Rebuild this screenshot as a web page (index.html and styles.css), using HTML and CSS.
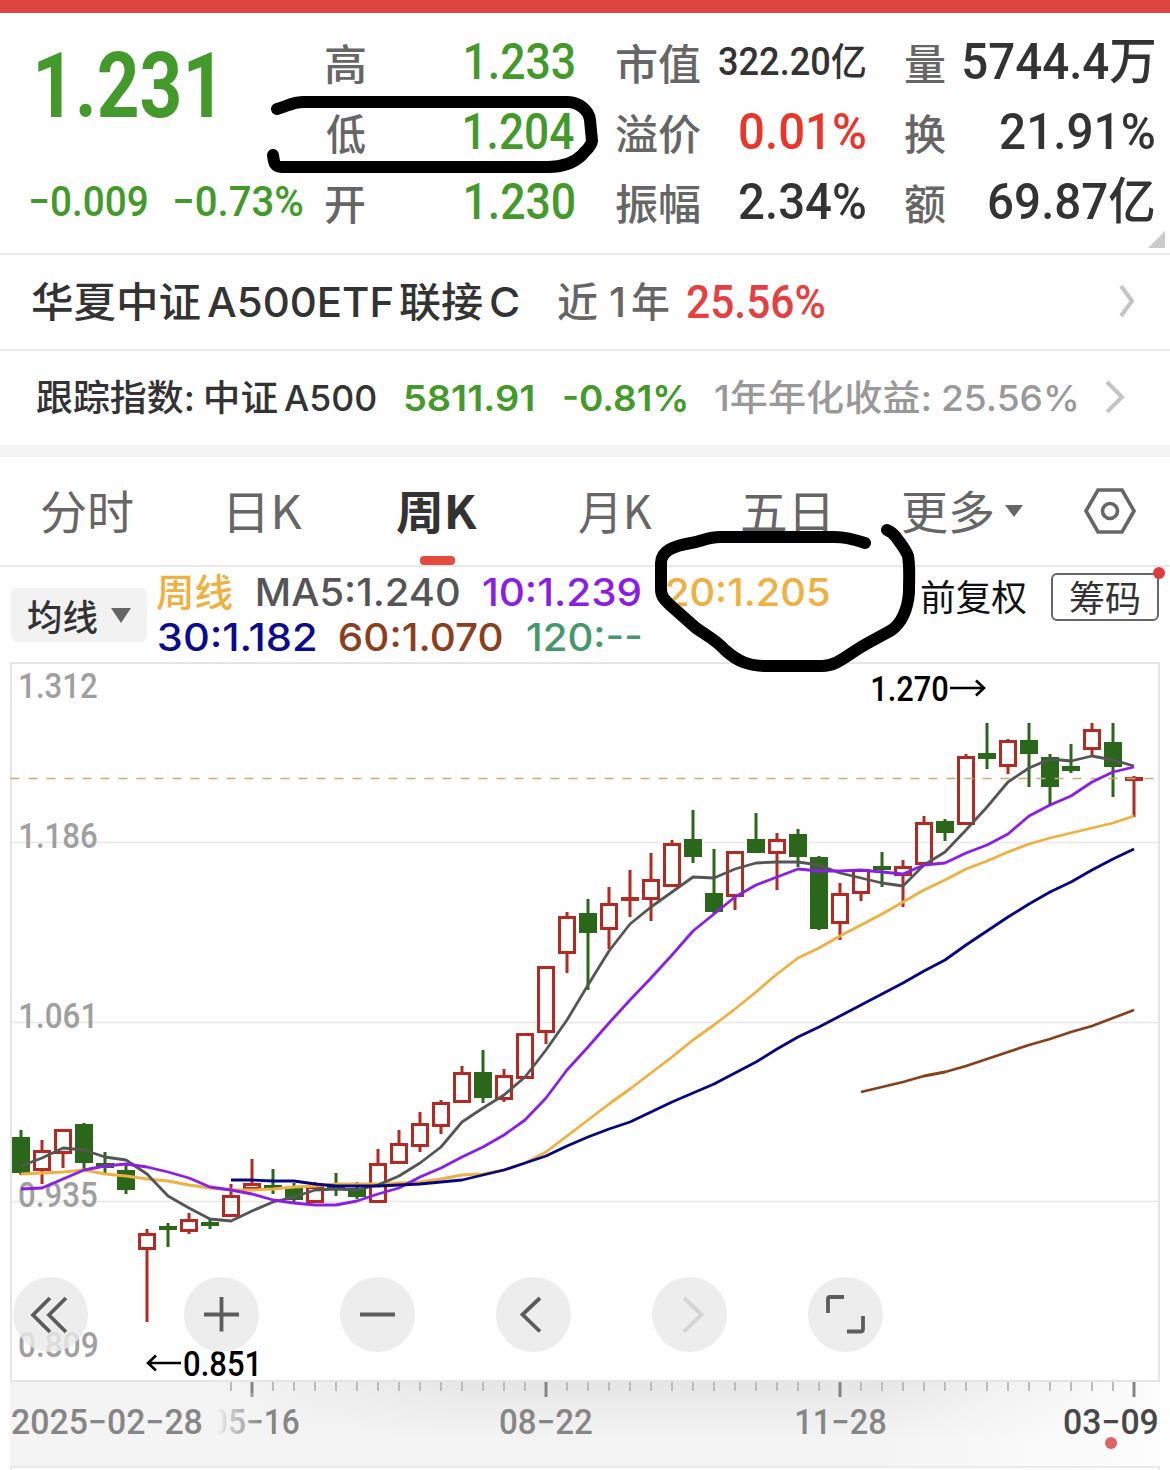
FILE: index.html
```html
<!DOCTYPE html>
<html lang="zh-CN">
<head>
<meta charset="utf-8">
<title>华夏中证A500ETF</title>
<link rel="stylesheet" href="styles.css">
</head>
<body>
<main class="screen">
  <div class="topbar"></div>

  <section class="quote">
    <div class="quote-main">
      <div class="price"><span class="t" data-w="174">1.231</span></div>
      <div class="change"><span class="t" data-w="116">−0.009</span><span class="t" data-w="128">−0.73%</span></div>
    </div>
    <dl class="stats s1">
      <div><dt class="t" data-w="39">高</dt><dd class="t down" data-w="108">1.233</dd></div>
      <div><dt class="t" data-w="39">低</dt><dd class="t down" data-w="109">1.204</dd></div>
      <div><dt class="t" data-w="39">开</dt><dd class="t down" data-w="108">1.230</dd></div>
    </dl>
    <dl class="stats s2">
      <div><dt class="t" data-w="84">市值</dt><dd class="t small" data-w="146">322.20亿</dd></div>
      <div><dt class="t" data-w="84">溢价</dt><dd class="t up" data-w="125">0.01%</dd></div>
      <div><dt class="t" data-w="84">振幅</dt><dd class="t" data-w="125">2.34%</dd></div>
    </dl>
    <dl class="stats s3">
      <div><dt class="t" data-w="40">量</dt><dd class="t" data-w="190">5744.4万</dd></div>
      <div><dt class="t" data-w="40">换</dt><dd class="t" data-w="153">21.91%</dd></div>
      <div><dt class="t" data-w="40">额</dt><dd class="t" data-w="165">69.87亿</dd></div>
    </dl>
    <i class="corner"></i>
  </section>

  <section class="row fund">
    <span class="t" data-w="168">华夏中证</span>
    <span class="t" data-w="184">A500ETF</span>
    <span class="t" data-w="82">联接</span>
    <span class="t" data-w="27">C</span>
    <span class="t muted" data-w="39">近</span>
    <span class="t muted" data-w="13">1</span>
    <span class="t muted" data-w="37">年</span>
    <span class="t rate" data-w="137">25.56%</span>
    <svg class="chev" width="20" height="36" viewBox="0 0 20 36"><path d="M3 3 L14 18 L3 33"/></svg>
  </section>

  <section class="row index">
    <span class="t" data-w="156">跟踪指数:</span>
    <span class="t" data-w="71">中证</span>
    <span class="t" data-w="92">A500</span>
    <span class="t down" data-w="128">5811.91</span>
    <span class="t down" data-w="122">-0.81%</span>
    <span class="t soft" data-w="215">1年年化收益:</span>
    <span class="t soft" data-w="133">25.56%</span>
    <svg class="chev" width="24" height="36" viewBox="0 0 24 36"><path d="M3 3 L18 18 L3 33"/></svg>
  </section>
  <div class="band"></div>

  <nav class="tabs">
    <span class="t" data-w="91">分时</span>
    <span class="t" data-w="72">日K</span>
    <span class="tab-on"><span class="t" data-w="80">周K</span></span>
    <span class="t" data-w="73">月K</span>
    <span class="t" data-w="86">五日</span>
    <span class="more"><span class="t" data-w="90">更多</span><svg width="18" height="12"><path d="M0 0H18L9 12Z" fill="#666"/></svg></span>
    <svg class="gear" width="52" height="48" viewBox="0 0 52 48"><path d="M14 3H38L50 24L38 45H14L2 24Z"/><circle cx="26" cy="24" r="7.5"/></svg>
  </nav>

  <section class="legend">
    <div class="ma-btn"><span class="t" data-w="69">均线</span><svg width="20" height="15"><path d="M0 0H20L10 15Z" fill="#666"/></svg></div>
    <div class="ma">
      <div class="ma-line l1">
        <span class="t c20" data-w="75">周线</span>
        <span class="t c5" data-w="201">MA5:1.240</span>
        <span class="t c10" data-w="157">10:1.239</span>
        <span class="t c20" data-w="162">20:1.205</span>
      </div>
      <div class="ma-line l2">
        <span class="t c30" data-w="156">30:1.182</span>
        <span class="t c60" data-w="162">60:1.070</span>
        <span class="t c120" data-w="113">120:--</span>
      </div>
    </div>
    <div class="adjust"><span class="t" data-w="105">前复权</span></div>
    <div class="chips"><span class="t" data-w="69">筹码</span><i class="dot"></i></div>
  </section>

  <svg class="chart" id="chart" width="1170" height="809" viewBox="0 661 1170 809">
    <defs>
      <linearGradient id="axisV" x1="0" y1="0" x2="0" y2="1"><stop offset="0" stop-color="#e6e6e6"/><stop offset=".7" stop-color="#f4f4f4"/></linearGradient>
      <linearGradient id="axisL" x1="0" x2="1"><stop offset="0" stop-color="#f4f4f4"/><stop offset=".17" stop-color="#f4f4f4"/><stop offset=".4" stop-color="#f4f4f4" stop-opacity="0"/><stop offset=".75" stop-color="#fff" stop-opacity="0"/><stop offset="1" stop-color="#fdfdfd"/></linearGradient>
      <linearGradient id="fade" gradientUnits="userSpaceOnUse" x1="204" x2="262" y1="0" y2="0"><stop offset="0" stop-color="#f4f4f4"/><stop offset=".22" stop-color="#f4f4f4"/><stop offset=".4" stop-color="#f4f4f4" stop-opacity=".7"/><stop offset="1" stop-color="#f4f4f4" stop-opacity="0"/></linearGradient>
    </defs>
    <rect x="10" y="1382" width="1150" height="84" fill="url(#axisV)"/>
    <rect x="10" y="1382" width="1150" height="84" fill="url(#axisL)"/>
    <path d="M10 1467H1160M11 1467V1470M1159 1467V1470" stroke="#e4e4e4" stroke-width="1.5"/>
    <rect x="11" y="663" width="1148" height="718" fill="none" stroke="#e5e5e5" stroke-width="2"/>
    <path d="M12 842.5H1158M12 1022.5H1158M12 1201.5H1158" stroke="#e8e8e8" stroke-width="1.5"/>
    <g class="scale">
      <text data-x="20" data-w="77" y="698">1.312</text>
      <text data-x="20" data-w="77" y="848">1.186</text>
      <text data-x="20" data-w="73" y="1028">1.061</text>
      <text data-x="19" data-w="78" y="1207">0.935</text>
      <text data-x="19" data-w="78" y="1357">0.809</text>
    </g>
    <g id="candles"></g>
    <path d="M10.5 778.5H1154" stroke="#c9ab78" stroke-width="1.6" stroke-dasharray="9 9"/>
    <g id="lines"></g>
    <g class="mark">
      <text data-x="872" data-w="76" y="701">1.270</text>
      <path d="M950 688H984M976 680.5L984 688L976 695.5"/>
      <text data-x="184" data-w="73" y="1376">0.851</text>
      <path d="M181 1363H148M156 1355.5L148 1363L156 1370.5"/>
    </g>
    <g id="ticks"></g>
    <g class="dates">
      <text data-x="211" data-w="88" y="1434">05−16</text>
      <rect x="204" y="1393" width="58" height="50" fill="url(#fade)"/>
      <text data-x="12" data-w="190" y="1434">2025−02−28</text>
      <text data-x="500" data-w="92" y="1434">08−22</text>
      <text data-x="796" data-w="90" y="1434">11−28</text>
      <text class="now" data-x="1064" data-w="93" y="1434">03−09</text>
    </g>
    <circle cx="1111" cy="1443" r="6" fill="#e06463"/>
    <g class="btns">
      <circle cx="50.500" cy="1314.500" r="37.500"/><circle cx="221.500" cy="1314.500" r="37.500"/><circle cx="377.500" cy="1314.500" r="37.500"/><circle cx="533.500" cy="1314.500" r="37.500"/><circle cx="689.500" cy="1314.500" r="37.500"/><circle cx="845.500" cy="1314.500" r="37.500"/>
      <path d="M50 1298L33 1315L50 1332M66 1298L49 1315L66 1332"/>
      <path d="M204 1314.5H239M221.5 1297V1331.5M360 1314.5H395"/>
      <path d="M540 1298L522.5 1314.5L540 1331.5"/>
      <path class="off" d="M684 1298L701.5 1314.5L684 1331.5"/>
      <path d="M844 1297H830Q828 1297 828 1299V1313M863 1316V1329Q863 1331.500 861 1331.500H847"/>
    </g>
  </svg>

  <svg class="ink" width="1170" height="1470" viewBox="0 0 1170 1470">
    <path d="M277 109C288 106 292 102 304 102H568C578 102 589 110 590 120L592 141C591 147 586 150 582 155C573 164 562 167 548 167H282C274 167 274 162 273 155"/>
    <path d="M865 543C852 539 845 537 834 537H720C708 537 703 541 691 543C673 546 661 551 661 563V589C661 597 665 600 670 605L696 628C706 635 716 640 725 650C738 662 750 666 766 666H822C838 666 846 655 868 643L890 631C902 624 908 608 909 592C909 578 910 566 908 556C905 548 900 543 896 537Q892 532 887 530"/>
  </svg>
</main>
<script src="app.js"></script>
</body>
</html>
```

FILE: styles.css
```css
* { box-sizing: border-box; margin: 0; padding: 0; }
body { background: #fefefe; font-family: Roboto, "Noto Sans CJK SC", sans-serif; color: #333; }
.screen { position: relative; width: 1170px; height: 1470px; overflow: hidden; }
.topbar { height: 13px; background: #dc4540; }

.t { display: block; white-space: nowrap; flex: none; }
.t > b { display: inline-block; font-weight: inherit; transform-origin: 0 50%; }
.down { color: #439a2b; }
.up { color: #e93629; }

.quote { position: relative; display: flex; height: 240px; padding: 14px 16px 0 0; }
.quote-main { width: 326px; color: #439a2b; }
.price { height: 116px; padding-left: 38px; font-size: 91px; line-height: 118px; font-weight: 700; }
.change { display: flex; gap: 28px; margin-top: 23px; padding-left: 31px; font-size: 42px; line-height: 71px; font-weight: 500; }
.stats > div { display: flex; justify-content: space-between; align-items: center; height: 70px; }
.stats dt { font: 500 42px/70px "Noto Sans CJK SC", sans-serif; color: #666; }
.stats dd { font-size: 50px; line-height: 70px; font-weight: 500; }
.stats dd.small { font-size: 38px; }
.s1 { width: 248px; }
.s2 { width: 249px; margin-left: 42px; }
.s3 { width: 249px; margin-left: 40px; }
.corner { position: absolute; right: 5px; bottom: 5px; width: 17px; height: 17px; background: #ccc; clip-path: polygon(100% 0, 100% 100%, 0 100%); }

.row { display: grid; align-items: center; height: 96px; border-top: 2px solid #e9e9e9; font-family: Inter, "Noto Sans CJK SC", sans-serif; font-weight: 500; }
.fund { grid-template-columns: 176px 192px 91px 67px 52px 22px 55px 431px 20px; padding-left: 32px; font-size: 41px; line-height: 60px; }
.index { grid-template-columns: 169px 78px 121px 159px 151px 228px 161px 24px; padding-left: 37px; font-size: 36px; line-height: 60px; }
.index .down { font-weight: 600; }
.muted { color: #666; }
.soft { color: #999; }
.rate { font-family: Roboto, sans-serif; font-size: 46px; color: #e63f41; }
.chev { fill: none; stroke: #c4c4c4; stroke-width: 4; margin-top: -2px; }
.band { height: 12px; background: #f4f4f4; }

.tabs { display: grid; grid-template-columns: 188px 167px 182px 163px 161px 181px 52px; align-items: center; height: 108px; padding: 0 0 4px 42px; font: 400 46px/66px "Noto Sans CJK SC", sans-serif; color: #666; }
.tab-on { position: relative; color: #333; font-weight: 700; }
.tab-on::after { content: ""; position: absolute; left: 23px; top: 80px; width: 35px; height: 9px; border-radius: 4px; background: #e64a3c; }
.more { display: flex; align-items: center; gap: 12px; }
.more svg { margin-top: 4px; }
.gear { fill: none; stroke: #666; stroke-width: 3.6; margin-top: 3px; }

.legend { display: flex; height: 96px; padding: 0 10px 0 11px; border-top: 2px solid #e9e9e9; }
.ma-btn { display: flex; align-items: center; gap: 14px; width: 136px; height: 54px; margin-top: 21px; padding-left: 17px; border-radius: 6px; background: #f2f2f2; font: 500 36px/50px "Noto Sans CJK SC", sans-serif; }
.ma { width: 763px; font: 550 38px/45px Inter, "Noto Sans CJK SC", sans-serif; margin-left: 10px; }
.ma-line { display: grid; height: 45px; }
.l1 { grid-template-columns: 101px 225px 184px 163px; margin-top: 3px; }
.l2 { grid-template-columns: 181px 187px 114px; padding-left: 2px; }
.c5 { color: #555; } .c10 { color: #8a1ee6; } .c20 { color: #efb042; }
.c30 { color: #0b0b90; } .c60 { color: #8b3f1d; } .c120 { color: #46976e; }
.adjust { width: 105px; margin-left: 1px; font: 400 36px/57px "Noto Sans CJK SC", sans-serif; color: #111; }
.chips { position: relative; width: 108px; height: 48px; margin: 6px 0 0 25px; padding-left: 17px; border: 2px solid #666; border-radius: 6px; font: 400 36px/43px "Noto Sans CJK SC", sans-serif; }
.dot { position: absolute; right: -8px; top: -8px; width: 12px; height: 12px; border-radius: 50%; background: #e03c3f; }

.chart { display: block; }
.chart text { font-family: Roboto, sans-serif; font-size: 35px; font-weight: 500; }
.scale text { fill: #9f9f9f; }
.mark text { fill: #000; }
.mark path { fill: none; stroke: #000; stroke-width: 2.6; }
.dates text { fill: #868686; }
.dates .now { fill: #484848; }
.candle { stroke-width: 3; }
.rise { stroke: #b32a22; fill: none; }
.fall { stroke: #2a671a; fill: #2a671a; }
.avg { fill: none; stroke-width: 2.8; stroke-linejoin: round; }
.btns circle { fill: #e9e9e9; fill-opacity: .82; }
.btns path { fill: none; stroke: #5c5c5c; stroke-width: 3.8; }
.btns .off { stroke: #d4d4d4; }
.ink { position: absolute; left: 0; top: 0; fill: none; stroke: #000; stroke-width: 12; stroke-linecap: round; stroke-linejoin: round; pointer-events: none; }
```

FILE: app.js
```js
const NS = 'http://www.w3.org/2000/svg';
const pen = document.createElement('canvas').getContext('2d');

// Visible extent of a string in an element's own font.
function extent(el) {
  const s = getComputedStyle(el);
  pen.font = `${s.fontWeight} ${s.fontSize} ${s.fontFamily}`;
  const m = pen.measureText(el.textContent);
  return { left: -m.actualBoundingBoxLeft, width: m.actualBoundingBoxLeft + m.actualBoundingBoxRight };
}

// Condense or widen labels to their column width.
document.querySelectorAll('.t').forEach(el => {
  const w = +el.dataset.w, e = extent(el), k = w / e.width;
  const b = document.createElement('b');
  b.textContent = el.textContent;
  b.style.transform = `translateX(${-e.left * k}px) scaleX(${k})`;
  el.replaceChildren(b);
  el.style.width = w + 'px';
});
document.querySelectorAll('.chart text').forEach(el => {
  const e = extent(el), k = el.dataset.w / e.width, y = el.getAttribute('y');
  el.removeAttribute('y');
  el.setAttribute('transform', `translate(${el.dataset.x - e.left * k} ${y}) scale(${k} 1)`);
});

function add(parent, tag, attrs) {
  const n = document.createElementNS(NS, tag);
  for (const k in attrs) n.setAttribute(k, attrs[k]);
  parent.appendChild(n);
}
const X = i => 21 + 21 * i;

// direction, high, body top, body bottom, low
const candles = [
  ['g',1130,1137,1173,1175],['r',1140,1150,1171,1184],['r',1129,1129,1154,1168],['g',1123,1124,1163,1169],
  ['g',1152,1163,1168,1173],['g',1165,1170,1190,1194],['r',1229,1233,1250,1322],['g',1223,1226,1230,1247],
  ['r',1213,1219,1232,1234],['g',1219,1222,1226,1229],['r',1184,1195,1217,1217],['r',1159,1183,1190,1190],
  ['g',1169,1185,1188,1194],['g',1183,1187,1200,1204],['r',1182,1186,1203,1203],['g',1173,1185,1188,1196],
  ['g',1182,1188,1197,1199],['r',1149,1163,1203,1203],['r',1130,1143,1164,1164],['r',1112,1123,1147,1152],
  ['r',1100,1102,1127,1134],['r',1066,1072,1103,1103],['g',1050,1072,1098,1103],['r',1069,1075,1100,1102],
  ['r',1033,1033,1079,1079],['r',966,966,1033,1044],['r',912,916,954,973],['g',899,913,933,990],
  ['r',887,903,930,949],['r',870,897,901,917],['r',853,879,900,921],['r',840,843,887,887],
  ['g',810,839,857,863],['g',849,893,912,914],['r',851,851,897,910],['g',813,839,853,853],
  ['r',833,839,854,890],['g',829,834,857,867],['g',856,857,929,930],['r',883,893,924,940],
  ['r',869,869,894,901],['g',852,866,870,887],['r',860,866,876,907],['r',816,822,865,865],
  ['g',819,821,833,841],['r',754,756,825,825],['g',723,753,759,769],['r',739,740,767,774],
  ['g',723,740,754,787],['g',754,757,787,805],['g',744,766,771,773],['r',723,729,750,755],
  ['g',723,742,767,797],['r',776,777,781,817]
];
const cg = document.getElementById('candles');
candles.forEach(([d, h, t, b, l], i) => {
  const x = X(i), cls = 'candle ' + (d === 'r' ? 'rise' : 'fall');
  add(cg, 'path', { class: cls, d: `M${x} ${h}V${t}M${x} ${b}V${l}` });
  add(cg, 'rect', { class: cls, x: x - 7.5, y: t + 1.5, width: 15, height: Math.max(b - t - 3, 1) });
});

const averages = [
  ['#efb042', 0, [1174,1173,1172,1170,1174,1176,1179,1181,1185,1188,1190,1190,1189,1187,1186,1184,1184,1184,1183,1182,1179,1175,1174,1170,1163,1152,1136,1120,1104,1089,1073,1057,1040,1025,1009,992,974,958,948,936,925,914,902,890,880,869,861,852,844,838,833,828,823,816]],
  ['#555', 0, [1166,1158,1148,1150,1157,1160,1174,1196,1208,1219,1221,1211,1202,1197,1190,1189,1190,1185,1176,1163,1147,1122,1108,1095,1077,1050,1020,985,951,924,907,892,877,878,869,863,862,862,865,873,878,883,886,865,852,830,807,782,768,759,761,756,760,766]],
  ['#8a1ee6', 0, [1189,1188,1179,1170,1166,1164,1167,1172,1178,1187,1190,1194,1200,1203,1205,1205,1201,1194,1188,1177,1168,1157,1147,1135,1120,1098,1070,1047,1023,1000,978,955,931,914,897,885,877,869,871,871,870,872,874,865,863,853,845,834,816,805,796,782,772,767]],
  ['#060680', 10, [1180,1180,1181,1181,1184,1186,1186,1186,1185,1184,1182,1180,1175,1170,1163,1156,1146,1137,1129,1122,1112,1102,1093,1084,1073,1062,1049,1037,1027,1016,1005,994,983,971,960,945,931,917,904,892,882,870,859,849]],
  ['#87401c', 40, [1092,1087,1082,1076,1072,1066,1059,1052,1045,1039,1032,1026,1018,1010]]
];
const lg = document.getElementById('lines');
averages.forEach(([c, start, ys]) =>
  add(lg, 'polyline', { class: 'avg', stroke: c, points: ys.map((y, i) => `${X(start + i)},${y}`).join(' ') }));

const tg = document.getElementById('ticks');
for (let i = 10; i < 54; i++) {
  const major = (i - 11) % 14 === 0;
  add(tg, 'path', { d: `M${X(i)} 1382V${major ? 1397 : 1391}`, stroke: major ? '#858585' : '#bcbcbc', 'stroke-width': major ? 3 : 2 });
}
```
